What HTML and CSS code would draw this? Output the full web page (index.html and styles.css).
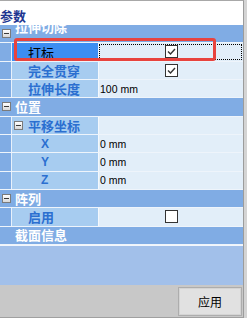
FILE: index.html
```html
<!DOCTYPE html>
<html lang="zh-cn">
<head>
  <meta charset="UTF-8" />
  <meta name="viewport" content="width=device-width, initial-scale=1.0"/>
  <title>参数</title>
  <link rel="stylesheet" href="styles.css">
</head>
<body>
  <div class="panel">
    <div class="title">参数</div>

    <div class="grid">
      <!-- 拉伸切除 -->
      <div class="row group first">
        <span class="tog"></span>
        <span class="gname">拉伸切除</span>
      </div>
      <div class="row prop selected">
        <div class="gut"></div>
        <div class="name">打标</div>
        <div class="val focus"><span class="chk on"><svg width="9" height="7" viewBox="0 0 9 7"><path d="M1 3.5 L3.5 6 L8 1" fill="none" stroke="#333" stroke-width="1.4"/></svg></span></div>
      </div>
      <div class="row prop">
        <div class="gut"></div>
        <div class="name">完全贯穿</div>
        <div class="val"><span class="chk on"><svg width="9" height="7" viewBox="0 0 9 7"><path d="M1 3.5 L3.5 6 L8 1" fill="none" stroke="#333" stroke-width="1.4"/></svg></span></div>
      </div>
      <div class="row prop">
        <div class="gut"></div>
        <div class="name">拉伸长度</div>
        <div class="val text">100 mm</div>
      </div>

      <!-- 位置 -->
      <div class="row group">
        <span class="tog"></span>
        <span class="gname">位置</span>
      </div>
      <div class="row prop">
        <div class="gut"></div>
        <div class="name sub"><span class="tog"></span>平移坐标</div>
        <div class="val"></div>
      </div>
      <div class="row prop">
        <div class="gut"></div>
        <div class="name deep">X</div>
        <div class="val text">0 mm</div>
      </div>
      <div class="row prop">
        <div class="gut"></div>
        <div class="name deep">Y</div>
        <div class="val text">0 mm</div>
      </div>
      <div class="row prop">
        <div class="gut"></div>
        <div class="name deep">Z</div>
        <div class="val text">0 mm</div>
      </div>

      <!-- 阵列 -->
      <div class="row group">
        <span class="tog"></span>
        <span class="gname">阵列</span>
      </div>
      <div class="row prop">
        <div class="gut"></div>
        <div class="name">启用</div>
        <div class="val"><span class="chk"></span></div>
      </div>

      <div class="row group">
        <span class="gname">截面信息</span>
      </div>
    </div>

    <div class="filler"></div>

    <div class="footer">
      <button type="button" class="apply">应用</button>
    </div>

    <div class="mark"></div>
  </div>
</body>
</html>
```

FILE: styles.css
```css
body {
  margin: 0;
  padding: 0;
  width: 247px;
  height: 318px;
  background-color: #d4d4d4;
  font-family: "Noto Sans CJK SC", "Liberation Sans", sans-serif;
  overflow: hidden;
}

.panel {
  position: relative;
  width: 243px;
  height: 317px;
  border-top: 1px solid #a8a8a8;
  border-right: 1px solid #9c9c9c;
  display: flex;
  flex-direction: column;
  background-color: #ffffff;
}

.title {
  height: 24px;
  line-height: 30px;
  font-size: 13px;
  font-weight: bold;
  color: #1d3591;
  padding-left: 0;
  overflow: hidden;
}

.row {
  height: 18.33px;
  box-sizing: border-box;
  display: flex;
  align-items: stretch;
  border-bottom: 1px solid #eef4fb;
  overflow: hidden;
}

.group {
  background-color: #80ace4;
  align-items: center;
}

.group .gname {
  color: #ffffff;
  font-size: 13px;
  font-weight: bold;
  line-height: 18px;
  padding-left: 15px;
}

.group .tog + .gname {
  padding-left: 4px;
}

.group .tog {
  margin-left: 2px;
}

.first .gname {
  align-self: flex-start;
  margin-top: -7px;
}

.tog {
  width: 7px;
  height: 7px;
  border: 1px solid #7b7b7b;
  background: linear-gradient(#ffffff, #d8d8d8);
  display: inline-flex;
  align-items: center;
  justify-content: center;
  flex: none;
}

.tog::after {
  content: "";
  width: 5px;
  height: 1px;
  background-color: #3a3a3a;
}

.gut {
  width: 11px;
  background-color: #80ace4;
  flex: none;
}

.name {
  width: 85px;
  flex: none;
  background-color: #a7ccf0;
  border-left: 1px solid #e8f1fb;
  display: flex;
  align-items: center;
  padding-left: 16px;
  box-sizing: border-box;
  width: 87px;
  color: #2b6fd0;
  font-size: 13px;
  font-weight: bold;
}

.name.sub {
  padding-left: 2px;
}

.name.sub .tog {
  margin-right: 5px;
}

.name.deep {
  padding-left: 29px;
  font-family: "Liberation Sans", sans-serif;
  font-size: 12px;
}

.selected .name {
  background-color: #3d8ef2;
  color: #000000;
  font-weight: normal;
}

.val {
  flex: 1;
  background-color: #e2eef9;
  border-left: 1px solid #f4f8fd;
  display: flex;
  align-items: center;
  justify-content: center;
}

.val.text {
  justify-content: flex-start;
  padding-left: 1px;
  font-family: "Liberation Sans", sans-serif;
  font-size: 10.5px;
  color: #000000;
}

.focus {
  outline: 1px dotted #000000;
  outline-offset: -2px;
}

.chk {
  width: 11px;
  height: 11px;
  border: 1px solid #333333;
  background-color: #ffffff;
  display: inline-flex;
  align-items: center;
  justify-content: center;
  margin-left: 1px;
}

.filler {
  flex: 1;
  background-color: #a2c0ea;
  border-top: 1px solid #f2f6fc;
}

.footer {
  height: 33px;
  box-sizing: border-box;
  background-color: #c8c8c8;
  border-bottom: 1px solid #a0a0a0;
  display: flex;
  justify-content: flex-end;
  padding: 2px 1px 0 0;
}

.apply {
  width: 64px;
  height: 29px;
  background-color: #e1e1e1;
  border: 1px solid #adadad;
  box-shadow: inset 0 0 0 1px #d4d4d4;
  font-family: "Noto Sans CJK SC", sans-serif;
  font-size: 12px;
  color: #000000;
  padding: 0;
}

.mark {
  position: absolute;
  left: 14px;
  top: 37px;
  width: 202px;
  height: 23px;
  box-sizing: border-box;
  border: 3px solid #e8433e;
  border-radius: 3px;
}
```
